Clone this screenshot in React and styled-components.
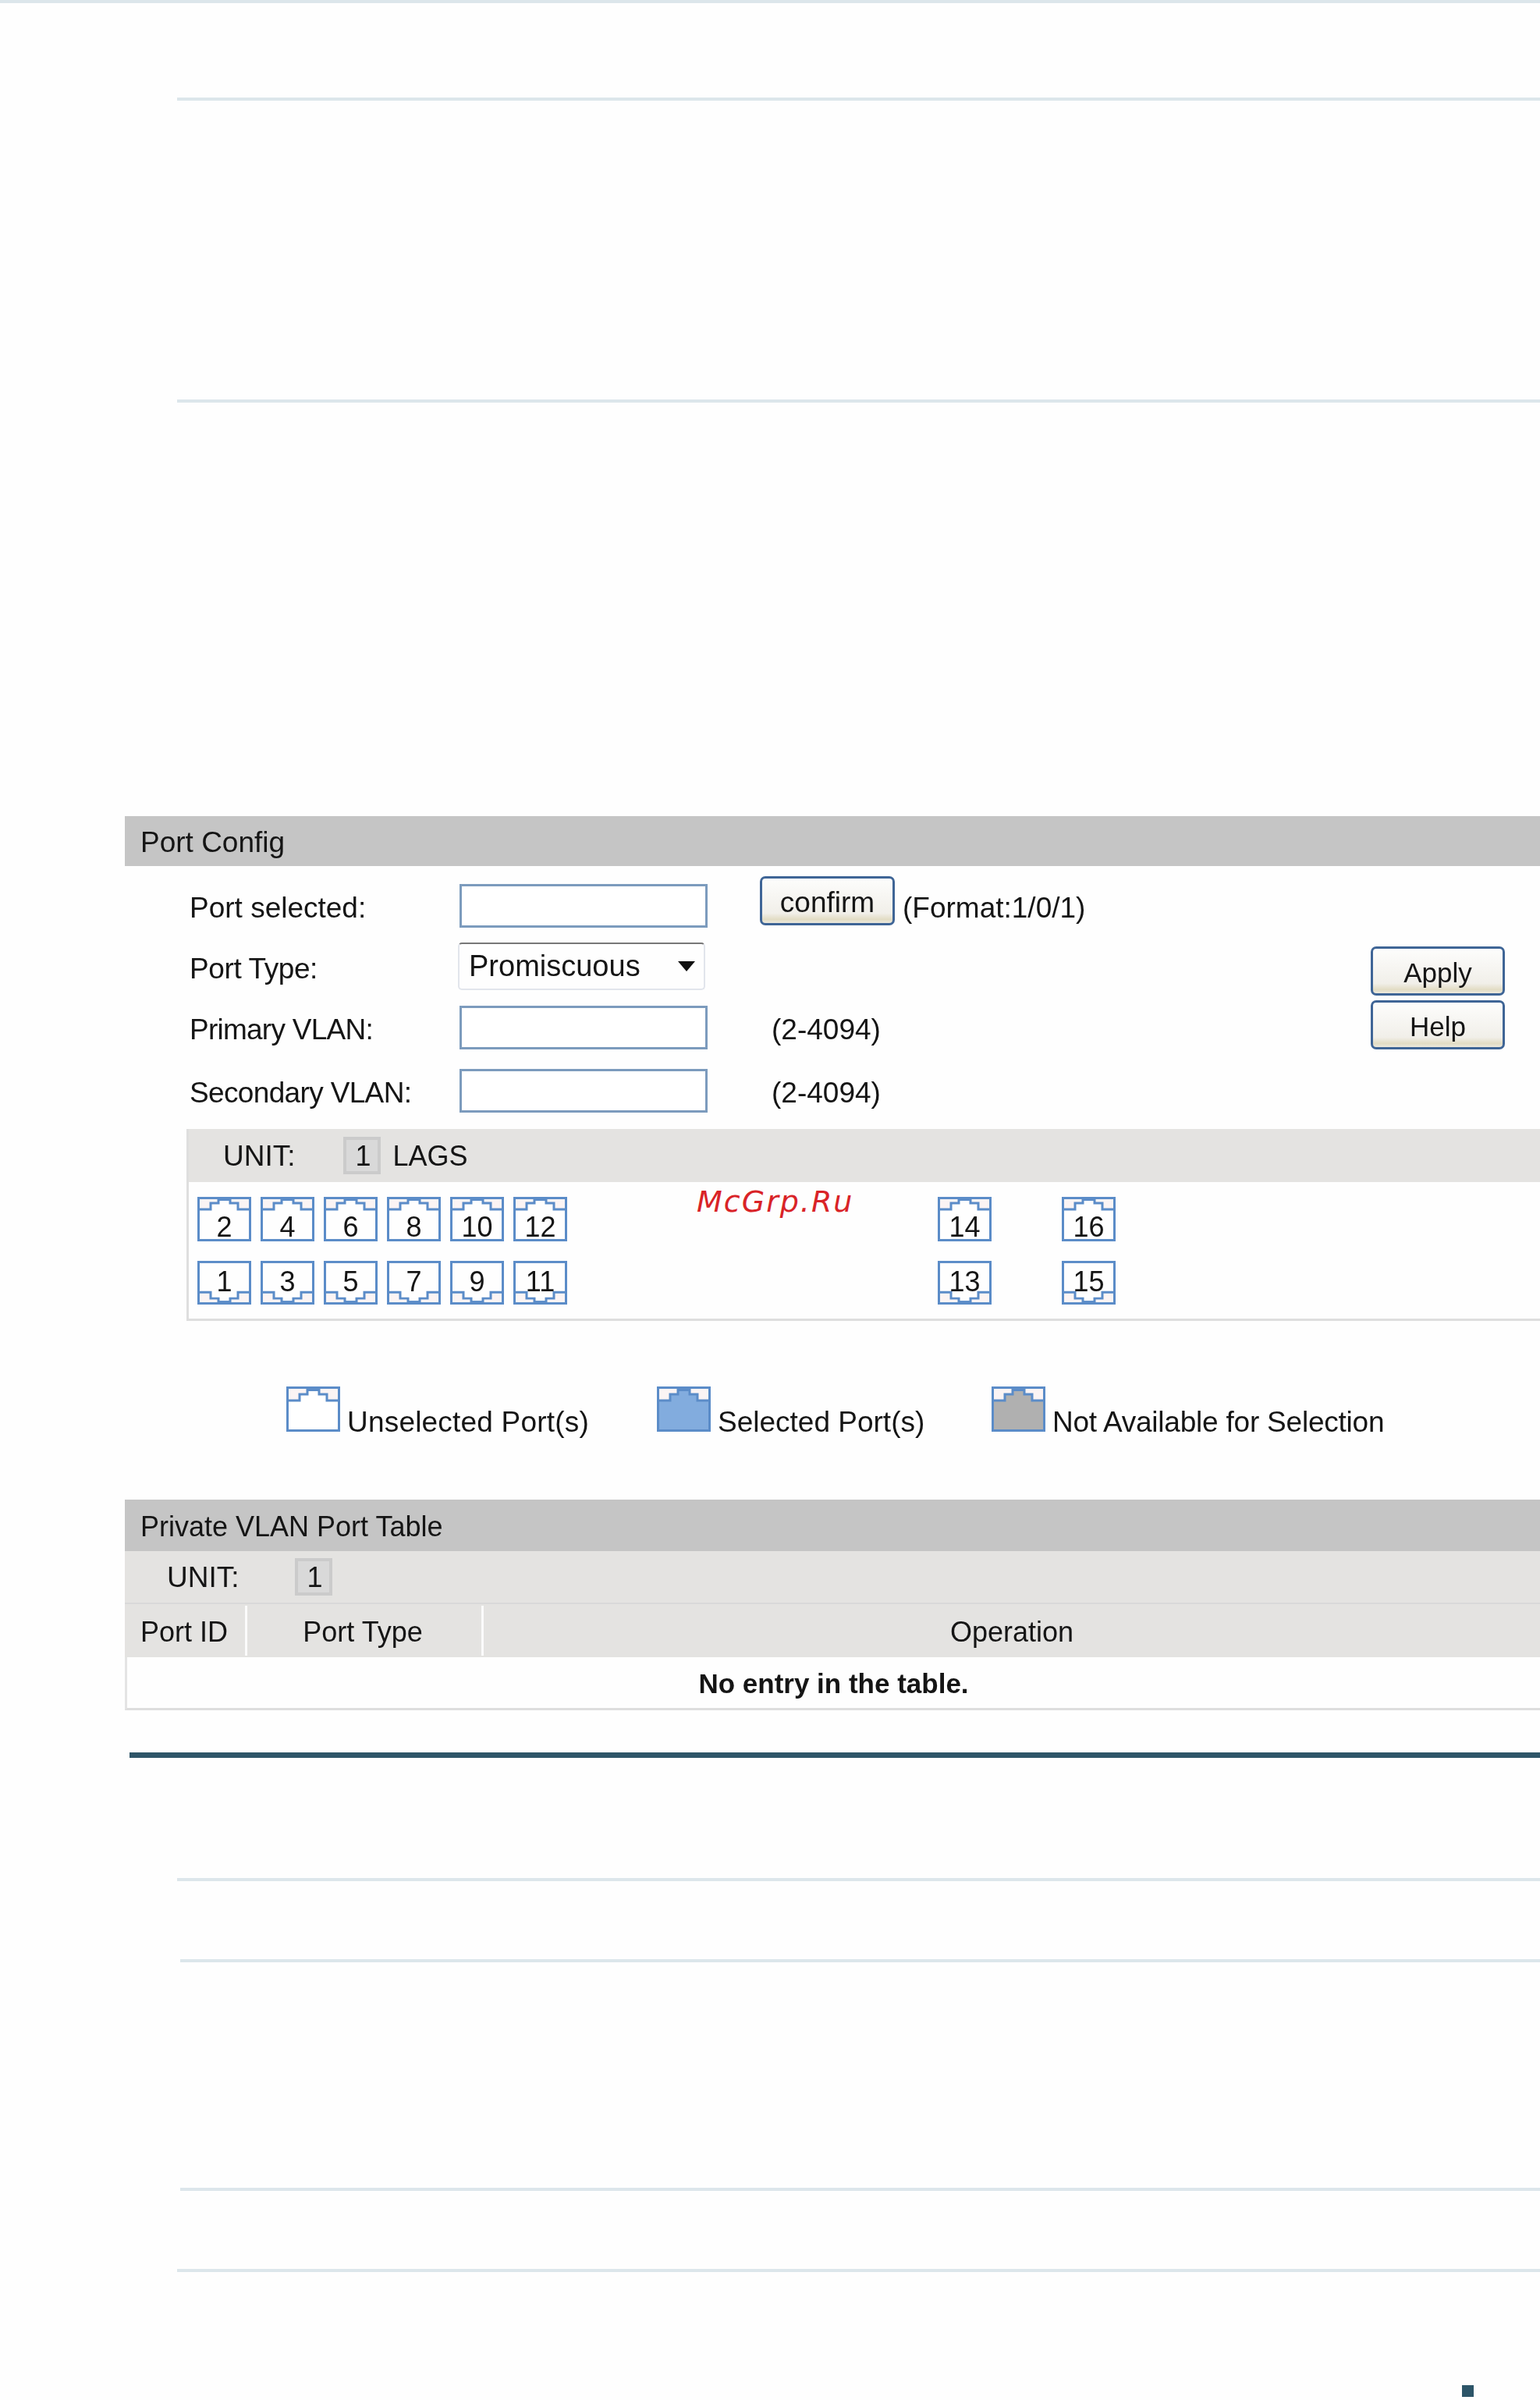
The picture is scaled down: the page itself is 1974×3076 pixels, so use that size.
import React from 'react';
import styled, { createGlobalStyle } from 'styled-components';

const GlobalStyle = createGlobalStyle`
  html, body {
    margin: 0;
    padding: 0;
    background: #fefefe;
  }
  body {
    font-family: "Liberation Sans", Arial, sans-serif;
    color: #151515;
  }
`;

const Page = styled.div`
  position: relative;
  width: 1974px;
  height: 3076px;
  overflow: hidden;
  background: #fefefe;
`;

/* pale rules left over from the manual page */
const Rule = styled.div`
  height: 4px;
  background: #dce6eb;
  margin-top: ${p => p.$top || 0}px;
  margin-left: ${p => p.$left || 0}px;
`;

const DarkRule = styled.div`
  height: 7px;
  background: #2e5568;
  margin: 54px 0 0 166px;
`;

const PageMark = styled.div`
  width: 15px;
  height: 15px;
  background: #2d5568;
  margin: 145px 0 0 1874px;
`;

/* the source is an enlarged screenshot, so the panels are slightly soft */
const Panel = styled.section`
  margin-left: 160px;
  margin-top: ${p => p.$top || 0}px;
  filter: blur(0.6px);
`;

const PanelTitle = styled.div`
  height: ${p => p.$height}px;
  background: #c5c5c5;
  display: flex;
  align-items: center;
  padding: 3px 0 0 20px;
  box-sizing: border-box;
  font-size: ${p => p.$size || 37}px;
`;

const FormArea = styled.div`
  display: flex;
  height: 337px;
  padding: 13px 45px 0 83px;
  box-sizing: border-box;
`;

const FormRows = styled.div`
  flex: 1;
`;

const FormRow = styled.div`
  display: flex;
  align-items: center;
  height: ${p => p.$height}px;
  font-size: 37px;
`;

const Label = styled.label`
  width: 346px;
  flex: none;
  padding-top: 6px;
  letter-spacing: ${p => p.$track || 0}px;
`;

const TextBox = styled.input`
  width: 318px;
  height: ${p => p.$height || 56}px;
  box-sizing: border-box;
  border: 3px solid #7c9bbd;
  background: #fff;
  padding: 0;
  outline: none;
`;

const Hint = styled.span`
  margin-left: ${p => p.$left}px;
  padding-top: 6px;
  white-space: nowrap;
`;

const PushButton = styled.button`
  width: ${p => p.$width || 172}px;
  height: 63px;
  box-sizing: border-box;
  border: 3px solid #3f6596;
  border-radius: 7px;
  background: linear-gradient(#fdfdfc, #f1efe9 78%, #e2dcc4 92%, #ece9de);
  font-family: inherit;
  font-size: ${p => p.$size || 35}px;
  color: #151515;
  padding: 5px 0 0;
`;

const ConfirmButton = styled(PushButton)`
  margin-left: 67px;
  margin-bottom: 12px;
`;

const DropBox = styled.div`
  width: 317px;
  height: 61px;
  margin-left: -2px;
  box-sizing: border-box;
  display: flex;
  align-items: center;
  justify-content: space-between;
  padding: 0 11px 0 12px;
  border: 2px solid #e2e5ec;
  border-top: 2px solid #777;
  border-radius: 5px;
  font-size: 38px;
`;

const Caret = styled.span`
  width: 0;
  height: 0;
  border-left: 11px solid transparent;
  border-right: 11px solid transparent;
  border-top: 13px solid #111;
`;

const ButtonColumn = styled.div`
  display: flex;
  flex-direction: column;
  gap: 6px;
  padding-top: 90px;
`;

const UnitPanel = styled.div`
  margin-left: 79px;
  border-left: 3px solid #dedede;
  border-bottom: 3px solid #dedede;
  height: 246px;
  box-sizing: border-box;
`;

const GreyBar = styled.div`
  display: flex;
  align-items: center;
  height: ${p => p.$height}px;
  background: #e4e3e1;
  font-size: 37px;
  padding: 2px 0 0 ${p => p.$left}px;
  box-sizing: border-box;
`;

const UnitBadge = styled.span`
  width: 48px;
  height: 48px;
  box-sizing: border-box;
  flex: none;
  display: flex;
  align-items: center;
  justify-content: center;
  margin: -2px 0 0 ${p => p.$left}px;
  padding: 2px 0 0 4px;
  border: 4px solid #cbcbcb;
  background: #d9d9d9;
  font-size: 36px;
`;

const LagLabel = styled.span`
  margin-left: 16px;
  font-size: 36px;
`;

const PortGrid = styled.div`
  display: flex;
  flex-direction: column;
  gap: 25px;
  padding: 19px 0 0 11px;
`;

const PortRow = styled.div`
  display: flex;
`;

const PortGroup = styled.div`
  display: flex;
  gap: ${p => p.$gap}px;
  margin-left: ${p => p.$left || 0}px;
`;

const PortBox = styled.div`
  position: relative;
  width: 69px;
  height: ${p => (p.$flip ? 56 : 57)}px;
  flex: none;
  font-size: 36px;
  text-align: center;
  line-height: 36px;
  box-sizing: border-box;
  padding-top: ${p => (p.$flip ? 9 : 21)}px;
`;

const PortShape = styled.svg`
  position: absolute;
  left: 0;
  top: 0;
  width: 100%;
  height: 100%;
`;

const PortNumber = styled.span`
  position: relative;
`;

const Legend = styled.div`
  display: flex;
  height: 229px;
  box-sizing: border-box;
  padding: 84px 0 0 207px;
  font-size: 37px;
`;

const LegendItem = styled.div`
  display: flex;
  align-items: baseline;
  width: ${p => (p.$width ? `${p.$width}px` : 'auto')};
  letter-spacing: ${p => p.$track || 0}px;
  white-space: nowrap;
`;

const LegendIcon = styled.svg`
  width: 69px;
  height: 58px;
  flex: none;
  margin: 0 9px -1px 0;
`;

const HeadRow = styled.div`
  display: grid;
  grid-template-columns: 157px 303px 1fr;
  height: 70px;
  padding-top: 2px;
  box-sizing: border-box;
  background: #e4e3e1;
  border-top: 2px solid #d9d9d9;
  font-size: 36px;
`;

const HeadCell = styled.div`
  display: flex;
  align-items: center;
  justify-content: ${p => (p.$start ? 'flex-start' : 'center')};
  padding: 3px ${p => p.$right || 0}px 0 ${p => (p.$start ? 20 : 0)}px;
  margin-bottom: 2px;
  border-right: ${p => (p.$last ? 'none' : '3px solid #fbfbfb')};
`;

const EmptyRow = styled.div`
  display: flex;
  align-items: center;
  justify-content: center;
  height: 68px;
  padding-top: 3px;
  box-sizing: border-box;
  border-left: 3px solid #e4e4e4;
  border-bottom: 3px solid #dedede;
  font-size: 35px;
  font-weight: bold;
`;

const Watermark = styled.div`
  position: absolute;
  left: 893px;
  top: 1518px;
  font-size: 38px;
  font-style: italic;
  letter-spacing: 2px;
  color: #d92327;
  font-family: "DejaVu Sans", sans-serif;
  line-height: 44px;
`;

function Port({ n, flip }) {
  // the RJ45 outline, mirrored for the lower row
  return (
    <PortBox $flip={flip}>
      <PortShape viewBox="0 0 69 57" preserveAspectRatio="none">
        <g transform={flip ? 'matrix(1 0 0 -1 0 57)' : undefined}>
          <path d="M2 2H27V8H17V16H2ZM42 2H67V16H52V8H42Z" fill="#fbf4f4" />
          <rect x="1.5" y="1.5" width="66" height="54" fill="none" stroke="#5b8cc8" strokeWidth="3" />
          <path d="M1 16H17V8H27V2M42 2V8H52V16H68" fill="none" stroke="#5b8cc8" strokeWidth="3" />
          <rect x="27" y="1" width="15" height="4" fill="#5b8cc8" />
        </g>
      </PortShape>
      <PortNumber>{n}</PortNumber>
    </PortBox>
  );
}

function KeyIcon({ fill }) {
  return (
    <LegendIcon viewBox="0 0 69 58">
      <path d="M17 18V10H27V4H42V10H52V18H67V56H2V18Z" fill={fill} />
      <path d="M3 3H27V10H17V18H3ZM42 3H66V18H52V10H42Z" fill="#fbf4f4" />
      <rect x="1.5" y="1.5" width="66" height="55" fill="none" stroke="#5b8cc8" strokeWidth="3" />
      <path d="M1 18H17V10H27V2M42 2V10H52V18H68" fill="none" stroke="#5b8cc8" strokeWidth="3" />
      <rect x="27" y="1" width="15" height="5" fill="#5b8cc8" />
    </LegendIcon>
  );
}

export default function App() {
  return (
    <Page>
      <GlobalStyle />
      <Rule />
      <Rule $top={121} $left={227} />
      <Rule $top={383} $left={227} />

      <Panel $top={530}>
        <PanelTitle $height={64}>Port Config</PanelTitle>
        <FormArea>
          <FormRows>
            <FormRow $height={75}>
              <Label>Port selected:</Label>
              <TextBox />
              <ConfirmButton $width={173} $size={37}>confirm</ConfirmButton>
              <Hint $left={10}>(Format:1/0/1)</Hint>
            </FormRow>
            <FormRow $height={81}>
              <Label $track={-0.4}>Port Type:</Label>
              <DropBox>
                Promiscuous
                <Caret />
              </DropBox>
            </FormRow>
            <FormRow $height={75}>
              <Label $track={-0.75}>Primary VLAN:</Label>
              <TextBox />
              <Hint $left={82}>(2-4094)</Hint>
            </FormRow>
            <FormRow $height={88}>
              <Label $track={-0.65}>Secondary VLAN:</Label>
              <TextBox />
              <Hint $left={82}>(2-4094)</Hint>
            </FormRow>
          </FormRows>
          <ButtonColumn>
            <PushButton>Apply</PushButton>
            <PushButton>Help</PushButton>
          </ButtonColumn>
        </FormArea>

        <UnitPanel>
          <GreyBar $height={68} $left={44}>
            UNIT:
            <UnitBadge $left={61}>1</UnitBadge>
            <LagLabel>LAGS</LagLabel>
          </GreyBar>
          <PortGrid>
            <PortRow>
              <PortGroup $gap={12}>
                {[2, 4, 6, 8, 10, 12].map(n => <Port key={n} n={n} />)}
              </PortGroup>
              <PortGroup $gap={90} $left={475}>
                {[14, 16].map(n => <Port key={n} n={n} />)}
              </PortGroup>
            </PortRow>
            <PortRow>
              <PortGroup $gap={12}>
                {[1, 3, 5, 7, 9, 11].map(n => <Port key={n} n={n} flip />)}
              </PortGroup>
              <PortGroup $gap={90} $left={475}>
                {[13, 15].map(n => <Port key={n} n={n} flip />)}
              </PortGroup>
            </PortRow>
          </PortGrid>
        </UnitPanel>

        <Legend>
          <LegendItem $width={475} $track={0.2}>
            <KeyIcon fill="#ffffff" />
            Unselected Port(s)
          </LegendItem>
          <LegendItem $width={429}>
            <KeyIcon fill="#82acde" />
            Selected Port(s)
          </LegendItem>
          <LegendItem $track={-0.22}>
            <KeyIcon fill="#b0b0b0" />
            Not Available for Selection
          </LegendItem>
        </Legend>

        <PanelTitle $height={66} $size={36}>Private VLAN Port Table</PanelTitle>
        <GreyBar $height={66} $left={54}>
          UNIT:
          <UnitBadge $left={71}>1</UnitBadge>
        </GreyBar>
        <HeadRow>
          <HeadCell $start>Port ID</HeadCell>
          <HeadCell $right={4}>Port Type</HeadCell>
          <HeadCell $last>Operation</HeadCell>
        </HeadRow>
        <EmptyRow>No entry in the table.</EmptyRow>
      </Panel>

      <DarkRule />
      <Rule $top={154} $left={227} />
      <Rule $top={100} $left={231} />
      <Rule $top={289} $left={231} />
      <Rule $top={100} $left={227} />
      <PageMark />

      <Watermark>McGrp.Ru</Watermark>
    </Page>
  );
}
